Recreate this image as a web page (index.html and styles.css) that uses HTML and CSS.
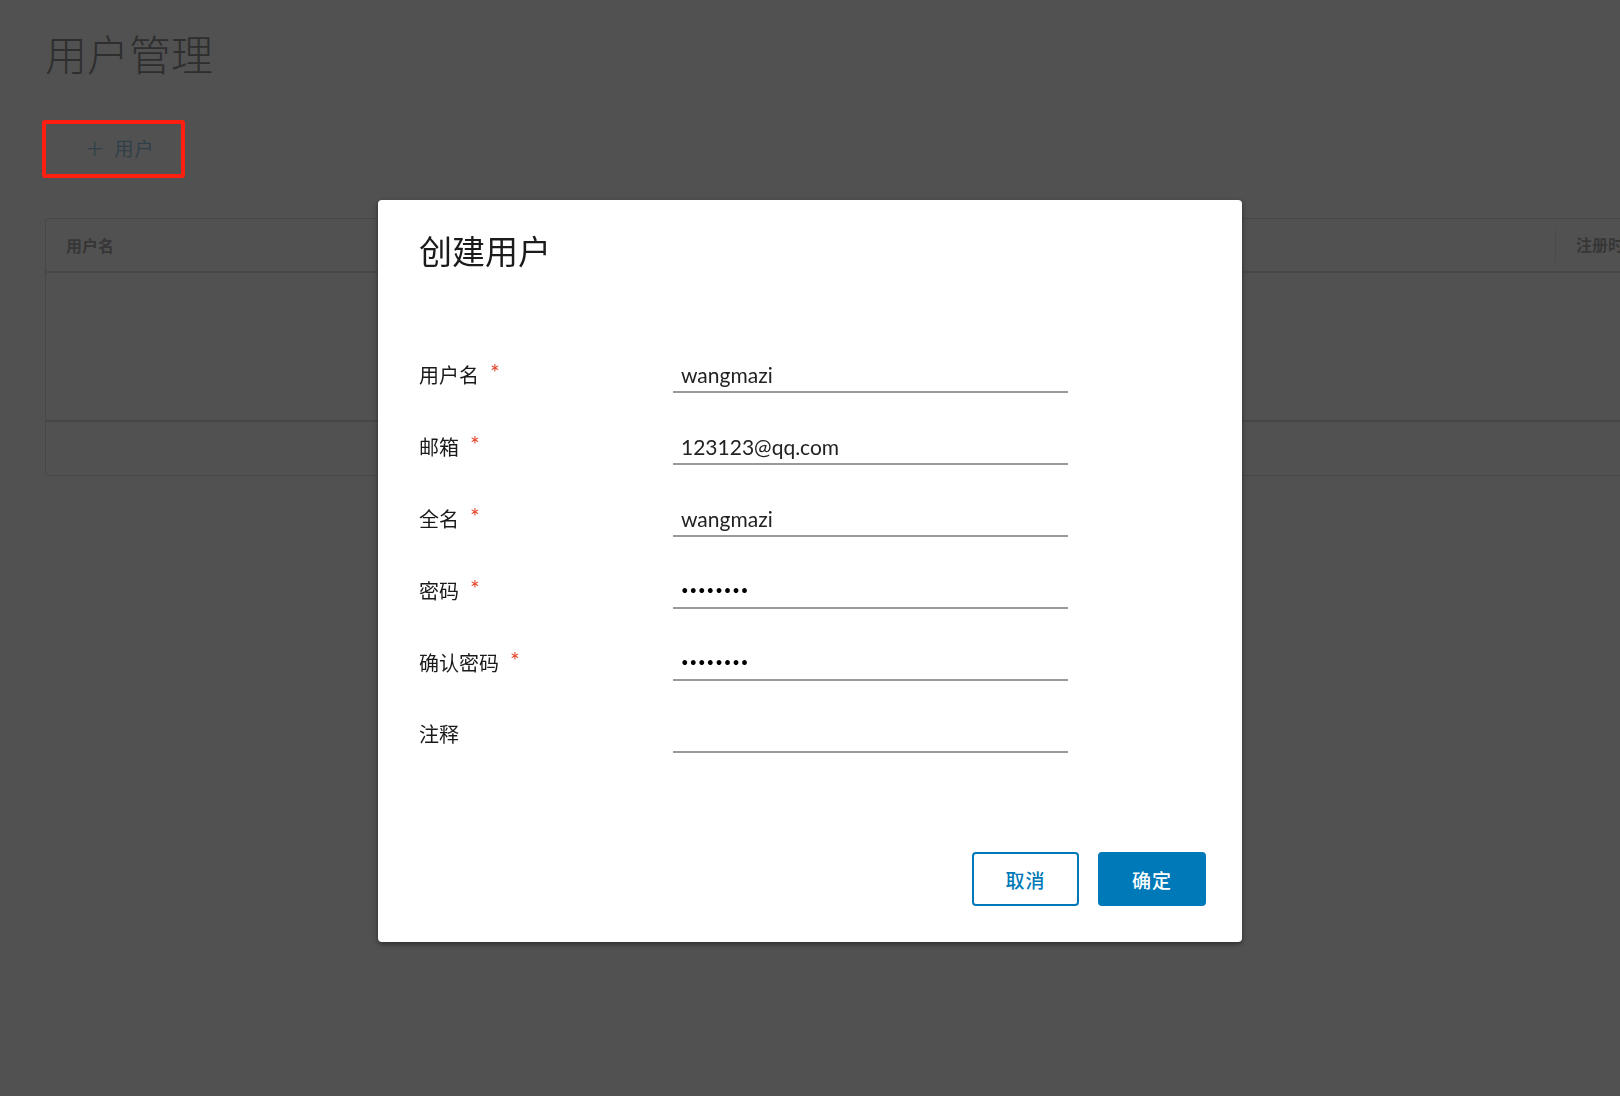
FILE: index.html
```html
<!DOCTYPE html>
<html lang="zh-CN">
<head>
    <meta charset="UTF-8">
    <title>用户管理</title>
    <link rel="stylesheet" href="styles.css">
</head>
<body>
    <div class="page">
        <h1 class="page-title">用户管理</h1>

        <!-- highlighted action -->
        <div class="mark-box">
            <button class="add-btn"><span class="plus">+</span>用户</button>
        </div>

        <div class="datagrid">
            <div class="dg-head">
                <div class="dg-col">用户名</div>
                <div class="dg-col dg-col-last">注册时间</div>
            </div>
            <div class="dg-body"></div>
            <div class="dg-foot"></div>
        </div>
    </div>

    <div class="modal-wrap">
        <div class="modal">
            <h3 class="modal-title">创建用户</h3>

            <form class="form">
                <label class="form-label">用户名<span class="req">*</span></label>
                <input class="form-input" type="text" value="wangmazi">

                <label class="form-label">邮箱<span class="req">*</span></label>
                <input class="form-input" type="text" value="123123@qq.com">

                <label class="form-label">全名<span class="req">*</span></label>
                <input class="form-input" type="text" value="wangmazi">

                <label class="form-label">密码<span class="req">*</span></label>
                <input class="form-input pwd" type="password" value="12345678">

                <label class="form-label">确认密码<span class="req">*</span></label>
                <input class="form-input pwd" type="password" value="12345678">

                <label class="form-label">注释</label>
                <input class="form-input" type="text" value="">
            </form>

            <div class="modal-footer">
                <button class="btn btn-outline">取消</button>
                <button class="btn btn-primary">确定</button>
            </div>
        </div>
    </div>
</body>
</html>
```

FILE: styles.css
```css
:root {
    --backdrop: #515151;
    --line-dark: #474747;
    --primary: #0079b8;
    --mark-red: #ff1e12;
    --font: "Lato", "Noto Sans CJK SC", sans-serif;
}

* {
    box-sizing: border-box;
    margin: 0;
    padding: 0;
}

body {
    font-family: var(--font);
    background: var(--backdrop);
    overflow: hidden;
    width: 1620px;
    height: 1096px;
}

/* page behind the dialog (already dimmed) */
.page {
    padding: 30px 0 0 45px;
}

.page-title {
    font-size: 42px;
    font-weight: 300;
    line-height: 50px;
    color: #2e2e2e;
}

.mark-box {
    width: 143px;
    height: 58px;
    margin: 40px 0 0 -3px;
    border: 4px solid var(--mark-red);
    border-radius: 3px;
    display: flex;
    align-items: center;
}

.add-btn {
    background: none;
    border: none;
    font-family: var(--font);
    font-size: 19px;
    color: #2f4049;
    display: flex;
    align-items: center;
    padding-left: 40px;
    margin-top: -4px;
    letter-spacing: 1px;
}

.plus {
    font-size: 30px;
    font-weight: 300;
    line-height: 20px;
    margin-right: 10px;
}

.datagrid {
    width: 1600px;
    margin-top: 40px;
    border: 1px solid var(--line-dark);
    border-radius: 4px;
}

.dg-head {
    display: grid;
    grid-template-columns: 1509px 1fr;
    height: 54px;
    border-bottom: 2px solid var(--line-dark);
    align-items: center;
}

.dg-col {
    padding-left: 20px;
    font-size: 16px;
    font-weight: 700;
    color: #363636;
    white-space: nowrap;
}

.dg-col-last {
    border-left: 1px solid #4b4b4b;
    height: 36px;
    line-height: 36px;
}

.dg-body {
    height: 149px;
    border-bottom: 2px solid var(--line-dark);
}

.dg-foot {
    height: 53px;
}

/* dialog */
.modal-wrap {
    position: fixed;
    inset: 0;
    display: flex;
    justify-content: center;
    padding-top: 200px;
}

.modal {
    width: 864px;
    height: 742px;
    background: #fff;
    border-radius: 4px;
    box-shadow: 0 2px 5px rgba(0, 0, 0, 0.45);
    padding: 31px 36px 36px 41px;
    display: flex;
    flex-direction: column;
}

.modal-title {
    font-size: 33px;
    font-weight: 400;
    line-height: 40px;
    color: #1b1b1b;
}

.form {
    margin-top: 86px;
    display: grid;
    grid-template-columns: 254px 395px;
    grid-auto-rows: 36px;
    row-gap: 36px;
    align-items: center;
}

.form-label {
    font-size: 20px;
    line-height: 34px;
    height: 36px;
    color: #1a1a1a;
}

.req {
    position: relative;
    top: -2px;
    color: #e3452c;
    font-size: 23px;
    margin-left: 11px;
}

.form-input {
    height: 36px;
    border: none;
    border-bottom: 2px solid #9a9a9a;
    outline: none;
    padding: 0 8px;
    font-family: var(--font);
    font-size: 21px;
    color: #222;
    background: transparent;
}

.form-input.pwd {
    font-size: 13px;
    letter-spacing: 1px;
    color: #000;
}

.modal-footer {
    margin-top: auto;
    display: flex;
    justify-content: flex-end;
    gap: 19px;
}

.btn {
    width: 107px;
    height: 54px;
    border-radius: 4px;
    font-family: var(--font);
    font-size: 19px;
    font-weight: 500;
    letter-spacing: 1px;
    cursor: pointer;
}

.btn-outline {
    background: #fff;
    border: 2px solid var(--primary);
    color: var(--primary);
}

.btn-primary {
    width: 108px;
    background: var(--primary);
    border: 2px solid var(--primary);
    color: #fff;
}
```
